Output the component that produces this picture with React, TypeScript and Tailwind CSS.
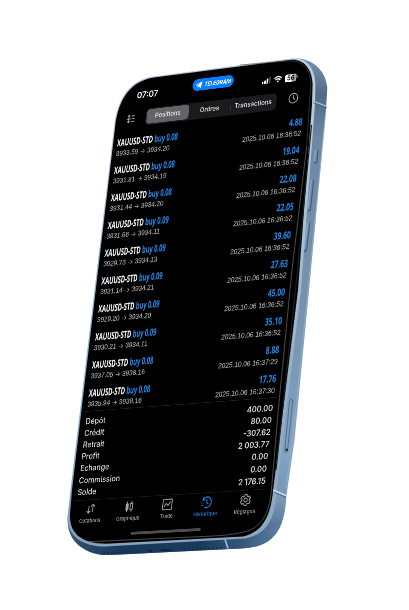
import React from "react";

type Point = [number, number];

/* Solves the 3D matrix that carries four flat points onto four points in perspective. */
function perspectiveMatrix(from: Point[], to: Point[]): string {
  const rows: number[][] = [];
  from.forEach(([x, y], i) => {
    const [u, v] = to[i];
    rows.push([x, y, 1, 0, 0, 0, -u * x, -u * y, u]);
    rows.push([0, 0, 0, x, y, 1, -v * x, -v * y, v]);
  });
  for (let c = 0; c < 8; c++) {
    let p = c;
    for (let r = c + 1; r < 8; r++) if (Math.abs(rows[r][c]) > Math.abs(rows[p][c])) p = r;
    [rows[c], rows[p]] = [rows[p], rows[c]];
    for (let r = 0; r < 8; r++) {
      if (r === c) continue;
      const f = rows[r][c] / rows[c][c];
      for (let k = c; k < 9; k++) rows[r][k] -= f * rows[c][k];
    }
  }
  const h = rows.map((r, i) => r[8] / r[i]);
  return `matrix3d(${[h[0], h[3], 0, h[6], h[1], h[4], 0, h[7], 0, 0, 1, 0, h[2], h[5], 0, 1]
    .map((n) => n.toFixed(10))
    .join(",")})`;
}

const screenTransform = perspectiveMatrix(
  [[10, 137], [392, 137], [10, 774], [392, 774]],
  [[117, 144.8], [302, 123.8], [77.4, 494.2], [265.4, 482.6]],
);

const trades = [
  ["0.08", "3933.59", "3934.20", "4.88", "16:36:52"],
  ["0.08", "3931.81", "3934.19", "19.04", "16:36:52"],
  ["0.08", "3931.44", "3934.20", "22.08", "16:36:52"],
  ["0.09", "3931.66", "3934.11", "22.05", "16:36:52"],
  ["0.09", "3929.73", "3934.13", "39.60", "16:36:52"],
  ["0.09", "3931.14", "3934.21", "27.63", "16:36:52"],
  ["0.09", "3929.20", "3934.20", "45.00", "16:36:52"],
  ["0.09", "3930.21", "3934.11", "35.10", "16:36:52"],
  ["0.08", "3937.05", "3938.16", "8.88", "16:37:29"],
  ["0.08", "3935.94", "3938.16", "17.76", "16:37:30"],
];

const totals = [
  ["Dépôt", "400.00"],
  ["Crédit", "80.00"],
  ["Retrait", "-307.62"],
  ["Profit", "2 003.77"],
  ["Echange", "0.00"],
  ["Commission", "0.00"],
  ["Solde", "2 176.15"],
];

function PhoneBody() {
  return (
    <svg className="absolute inset-0" width="409" height="610" viewBox="0 0 409 610" fill="none">
      <defs>
        <linearGradient id="side" x1="320" y1="60" x2="275" y2="550" gradientUnits="userSpaceOnUse">
          <stop offset="0" stopColor="#7891aa" />
          <stop offset=".07" stopColor="#506b85" />
          <stop offset=".16" stopColor="#6c88a3" />
          <stop offset=".5" stopColor="#7693ae" />
          <stop offset=".8" stopColor="#82a3c2" />
          <stop offset=".9" stopColor="#7696b4" />
          <stop offset="1" stopColor="#3c5d7e" />
        </linearGradient>
        <linearGradient id="bottom" x1="66" y1="0" x2="290" y2="0" gradientUnits="userSpaceOnUse">
          <stop offset="0" stopColor="#34536f" />
          <stop offset=".25" stopColor="#17385a" />
          <stop offset=".6" stopColor="#1b3a5b" />
          <stop offset=".78" stopColor="#34577a" />
          <stop offset="1" stopColor="#6788a8" />
        </linearGradient>
        <linearGradient id="rim" x1="70" y1="540" x2="320" y2="70" gradientUnits="userSpaceOnUse">
          <stop offset="0" stopColor="#86a2bb" />
          <stop offset=".45" stopColor="#93b0ca" />
          <stop offset="1" stopColor="#bccddd" />
        </linearGradient>
      </defs>
      <path d="M295 58.5C312 58 326 70 327.3 88L326 110L309 290L294.5 440L286.5 495C285 526 276 545 248 548L220 549.5L112 555C97 555.5 85 551 77 544C69 536 67 526 67.7 517Z" fill="url(#side)" />
      <path d="M68 515C67 535 80 555 107 555L230 549C258 549 276 541 282 522L250 520Z" fill="url(#bottom)" />
      <path d="M153 76.5L293 58.3C306 57.5 315 68 315.4 84L315 104L301 290L277 487C275 519 268 534 245 538.5L105 546.5C80 546 66.5 535 67.7 515L70.5 490L114 128C117 98 130 80 153 76.5Z" fill="url(#rim)" />
      <path d="M154 77.6L291 59.8C304 59 312.2 69 312.6 84L312 104L298 290L273.5 487C271 516 263 532 243 536.5L106 543.8C82 543.6 69 534 70 514L72 490L115 128C118 99 131 81 154 77.6Z" fill="#000" />
      <path d="M240 65L290 60.8C303 61 311 69 310.8 84L306.6 147" stroke="#4c4b4a" strokeWidth=".6" />
      <path d="M306.6 147L291.7 273L278 413L271.7 487C270 512 262 525 250 530C240 534 226 535.3 210 536.2L88 541.7" stroke="#77736e" strokeWidth=".65" />
      <path d="M311.5 125L295.5 290L276 470" stroke="#1a1d22" strokeWidth="1.2" />
      <path d="M325.7 112L308 290L293 438L286 488" stroke="#9cb7d0" strokeOpacity=".6" strokeWidth="1.2" />
      <path d="M313 101L327 106.5" stroke="#b8cada" strokeWidth="1.2" />
      <path d="M313 102.6L327 108" stroke="#4e677f" strokeWidth=".8" />
      <path d="M273 490L287 496" stroke="#cadbea" strokeWidth="1.7" />
      <path d="M274 492L286 497.5" stroke="#3d5872" strokeWidth=".8" />
      <path d="M225 539.5L228 548.5" stroke="#a5bfd6" strokeWidth="1.6" />
      <g stroke="#3d5771" strokeWidth="1" strokeLinecap="round">
        <path d="M318 150L316.8 162.5Q314.5 165 314.5 162" />
        <path d="M313.6 180L310.4 210Q308.5 213 308.3 209" />
        <path d="M309.8 223L306.5 250Q304.5 254 304.3 250" />
        <path d="M292.7 401L287.7 449Q286.8 455 284.7 451L289.5 402Q291 396 292.7 401Z" strokeWidth=".7" />
      </g>
      <g stroke="#a6bfd6" strokeWidth=".7" strokeLinecap="round">
        <path d="M315.7 150L314.4 161" />
        <path d="M311.2 180L308 209" />
        <path d="M307.4 223L304 250" />
      </g>
      <circle cx="286.7" cy="449.7" r="1.3" fill="#142a40" />
      <path d="M103 553L135 551.5M184 549.5L222 547.5" stroke="#102a45" strokeWidth="1.2" strokeDasharray="2 2" />
      <path d="M148 550.8H152M161 550H171" stroke="#0b1f35" strokeWidth="1.4" />
    </svg>
  );
}

function StatusBar() {
  return (
    <div className="flex h-[75px] pl-[41px] pt-[30px]">
      <div className="w-[116px] pt-[8px] font-['Inter'] text-[16.5px] font-semibold leading-5 text-white">07:07</div>
      <div className="mt-px flex h-[22px] w-[85px] items-center justify-center gap-1 rounded-full bg-[#087bff] text-white">
        <svg width="15" height="15" viewBox="0 0 24 24" fill="currentColor">
          <path d="M22.500 2 18.500 21.500 11 16.500 7.500 20 7.200 14 17 6 5 13 1 11Z" />
        </svg>
        <span className="font-['Inter'] text-[10px] font-bold italic tracking-[-0.1px]">TELEGRAM</span>
      </div>
      <div className="ml-[59px] mt-px flex h-[37px] items-center gap-[6px] text-white">
        <svg width="18" height="13" viewBox="0 0 18 13" fill="currentColor">
          <rect x="0" y="8" width="3.2" height="4.5" rx="1" />
          <rect x="4.8" y="6" width="3.2" height="6.5" rx="1" />
          <rect x="9.6" y="3" width="3.2" height="9.5" rx="1" />
          <rect x="14.4" y="0" width="3.2" height="12.5" rx="1" opacity=".3" />
        </svg>
        <svg width="17" height="13" viewBox="0 0 17 13" fill="none" stroke="currentColor" strokeWidth="2.3">
          <path d="M1 4.800Q8.500-1.800 16 4.800M3.600 7.800Q8.500 3.600 13.400 7.800" />
          <path d="M8.500 12.500 6 9.800Q8.500 8 11 9.800Z" fill="currentColor" stroke="none" />
        </svg>
        <div className="flex items-center gap-px">
          <div className="relative flex h-[14px] w-[23px] items-center justify-center overflow-hidden rounded-[4px] bg-[#a4a4a4]">
            <div className="absolute inset-y-0 left-0 w-[14px] bg-white" />
            <span className="relative font-['Inter'] text-[12px] font-bold leading-none text-black">56</span>
          </div>
          <div className="h-[5px] w-[2px] rounded-r bg-[#777]" />
        </div>
      </div>
    </div>
  );
}

function Toolbar() {
  return (
    <div className="flex h-[46px] items-start">
      <svg className="ml-[25px] mt-[7px]" width="17" height="18" viewBox="0 0 17 18" fill="none" stroke="#c4c4c4" strokeWidth="1.4">
        <path d="M4 2V16M1.200 4.800 4 2 6.800 4.800M1.200 13.200 4 16 6.800 13.200M0 9H8M10 4H16.500M10 9H16.500M10 14H16.500" />
      </svg>
      <div className="ml-[23px] flex h-[31px] w-[270px] items-center rounded-lg bg-[#1b1b1e] p-[2px] font-['Inter'] text-[12.3px] font-medium text-[#e4e4e6]">
        <div className="flex h-full w-[88px] items-center justify-center rounded-md bg-[#636368]">Positions</div>
        <div className="flex-1 text-center">Ordres</div>
        <div className="h-4 w-px bg-[#38383b]" />
        <div className="w-[91px] text-center">Transactions</div>
      </div>
      <svg className="ml-[24px] mt-[3px]" width="20" height="20" viewBox="0 0 20 20" fill="none" stroke="#bdbdbd" strokeWidth="1.6">
        <circle cx="10" cy="10" r="8.8" />
        <path d="M10 4.500V10.200L13.300 12.500" />
      </svg>
    </div>
  );
}

function History() {
  return (
    <div className="h-[504px] px-[10px]">
      {trades.map(([lots, open, close, profit, time]) => (
        <div key={open + profit} className="flex h-[51px] justify-between whitespace-nowrap">
          <div>
            <div className="h-[23px] origin-left scale-x-[.68] pt-[2px] font-['Open_Sans'] text-[17.5px] font-bold leading-[20px] text-[#f4f4f4] [-webkit-text-stroke:0.3px]">
              XAUUSD-STD <span className="text-[#2380dc]">buy {lots}</span>
            </div>
            <div className="font-['Liberation_Sans'] text-[13px] leading-[19px] text-[#a8a8a8] [-webkit-text-stroke:0.25px]">
              {open} <span className="font-['Inter'] text-[12px]">→</span> {close}
            </div>
          </div>
          <div className="text-right">
            <div className="h-[23px] origin-right scale-x-[.76] pt-px font-['Open_Sans'] text-[17.5px] font-bold leading-[20px] text-[#2380dc] [-webkit-text-stroke:0.3px]">{profit}</div>
            <div className="font-['Liberation_Sans'] text-[13px] leading-[19px] text-[#a8a8a8] [-webkit-text-stroke:0.25px]">2025.10.06 {time}</div>
          </div>
        </div>
      ))}
    </div>
  );
}

function Totals() {
  return (
    <div className="mx-1 h-[160px] border-t border-[#242426] px-[6px] pt-[7px] font-['Inter'] text-[14.5px] text-[#dedede]">
      {totals.map(([label, amount]) => (
        <div key={label} className="flex h-[21.2px] items-center justify-between">
          <span className="font-medium">{label}</span>
          <span className="font-semibold">{amount}</span>
        </div>
      ))}
    </div>
  );
}

const tabs: { label: string; icon: React.ReactNode }[] = [
  { label: "Cotations", icon: <path d="M7 6V20M2.500 15.500 7 20 11.500 15.500M16 18V3M11.500 7.500 16 3 20.500 7.500" /> },
  {
    label: "Graphique",
    icon: (
      <>
        <path d="M7 2V22M17 1V6M17 17V22" />
        <rect x="5" y="7" width="4.5" height="11" fill="currentColor" />
        <rect x="14" y="5.5" width="5.5" height="12" rx="1" />
      </>
    ),
  },
  { label: "Trade", icon: <><rect x="2" y="2" width="20" height="20" rx="1.5" /><path d="M5 16 9.500 10 13.500 14 19 7" /></> },
  { label: "Historique", icon: <path d="M4.200 7A10 10 0 1 1 8 21.200M4.500 2.500 4 8 9 8M2 12V14M3.500 17 5 19M12.500 6.500V12.500L16.500 16" strokeWidth="2.2" /> },
  {
    label: "Réglages",
    icon: (
      <>
        <path d="m9.800 2h4.400l.7 3 2.300 1.300 2.900-.9 2.200 3.800-2.200 2.100v2.600l2.200 2.100-2.200 3.800-2.900-.9-2.300 1.300-.7 3H9.800l-.7-3-2.300-1.300-2.900.9-2.200-3.800 2.200-2.100v-2.600L1.700 9.200l2.200-3.800 2.900.9L9.100 5Z" />
        <circle cx="12" cy="12.600" r="3.7" />
      </>
    ),
  },
];

function TabBar() {
  return (
    <div className="h-[91px] border-t border-[#1d1d1f] px-[3px] pt-[5px]">
      <div className="flex h-[56px]">
        {tabs.map(({ label, icon }) => (
          <div key={label} className={`flex w-[78.5px] flex-col items-center gap-[3px] ${label === "Historique" ? "text-[#247fd9]" : "text-[#a5a5a5]"}`}>
            <svg width="22" height="22" viewBox="0 0 24 24" fill="none" stroke="currentColor" strokeWidth="1.9">{icon}</svg>
            <span className="font-['Inter'] text-[9.5px] font-semibold leading-[14px] opacity-90">{label}</span>
          </div>
        ))}
      </div>
      <div className="mx-auto h-[5px] w-[142px] rounded-full bg-[#4d4d4d]" />
    </div>
  );
}

export default function App() {
  return (
    <main className="relative h-[610px] w-[409px] overflow-hidden bg-white">
      <PhoneBody />
      <div className="absolute left-0 top-0 flex h-[876px] w-[402px] origin-top-left flex-col" style={{ transform: screenTransform }}>
        <StatusBar />
        <Toolbar />
        <History />
        <Totals />
        <TabBar />
      </div>
    </main>
  );
}
